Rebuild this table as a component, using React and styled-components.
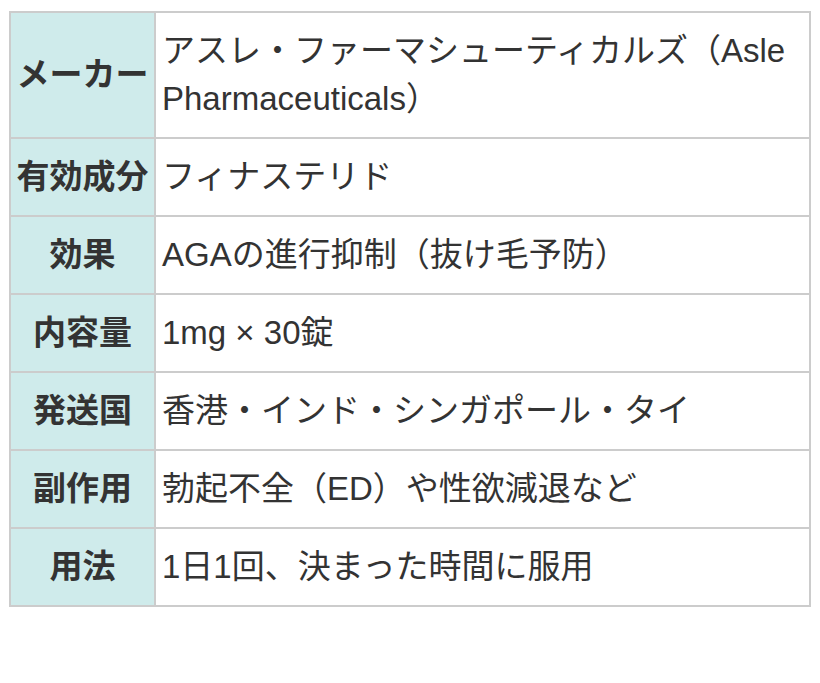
import React from "react";
import styled, { createGlobalStyle } from "styled-components";

const Global = createGlobalStyle`
  html, body { margin: 0; padding: 0; background: #fff; }
  body { font-family: "Liberation Sans", "Noto Sans CJK JP", sans-serif; color: #333; }
`;

const Page = styled.div`
  padding: 11px 9px;
`;

const Table = styled.div`
  width: 802px;
  display: grid;
  grid-template-columns: 143px 1fr;
  gap: 2px;
  padding: 2px;
  box-sizing: border-box;
  background: #cccccc;
`;

const Head = styled.div`
  background: #cfebeb;
  font-weight: 700;
  font-size: 33px;
  line-height: 48px;
  padding: 14px 0;
  display: flex;
  align-items: center;
  justify-content: center;
  white-space: nowrap;
`;

const Cell = styled.div`
  background: #fff;
  font-size: 33px;
  line-height: 48px;
  padding: 14px 6px;
`;

const rows = [
  ["メーカー", "アスレ・ファーマシューティカルズ（Asle Pharmaceuticals）"],
  ["有効成分", "フィナステリド"],
  ["効果", "AGAの進行抑制（抜け毛予防）"],
  ["内容量", "1mg × 30錠"],
  ["発送国", "香港・インド・シンガポール・タイ"],
  ["副作用", "勃起不全（ED）や性欲減退など"],
  ["用法", "1日1回、決まった時間に服用"],
];

export default function App() {
  return (
    <Page>
      <Global />
      <Table>
        {rows.map(([h, v]) => (
          <React.Fragment key={h}>
            <Head>{h}</Head>
            <Cell>{v}</Cell>
          </React.Fragment>
        ))}
      </Table>
    </Page>
  );
}
